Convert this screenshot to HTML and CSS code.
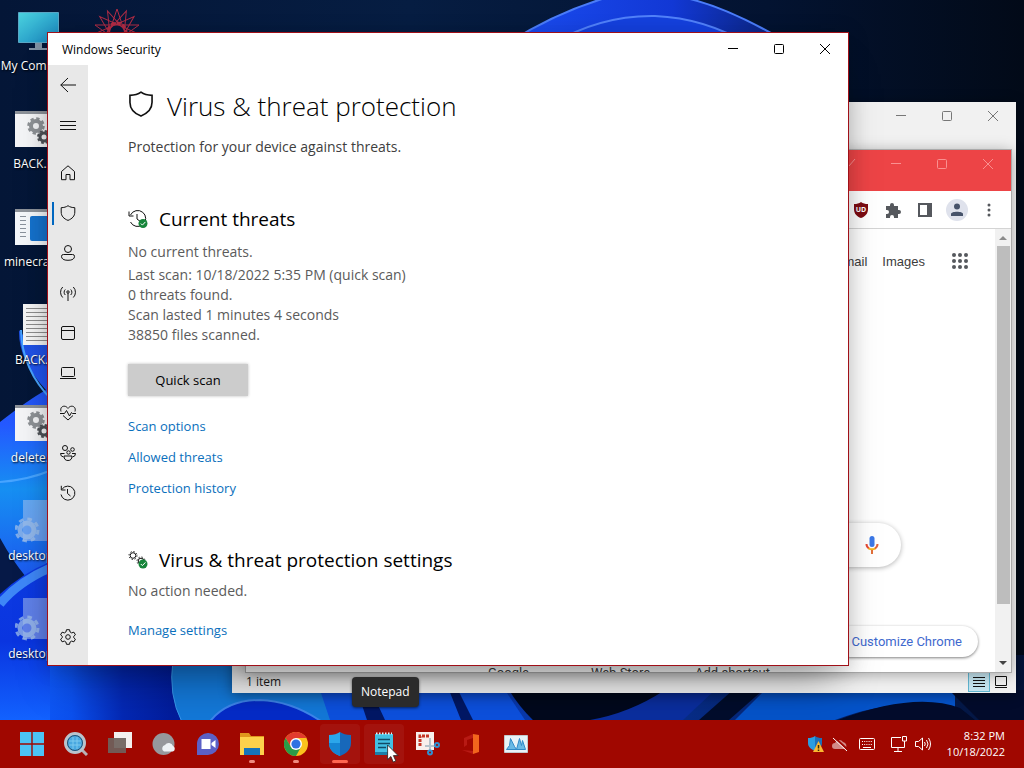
FILE: index.html
```html
<!DOCTYPE html>
<html lang="en">

<head>
    <meta charset="UTF-8">
    <meta name="viewport" content="width=device-width, initial-scale=1.0">
    <title>Desktop</title>
    <link rel="stylesheet" href="styles.css">
</head>

<body>
    <!-- shared symbols -->
    <svg class="symbols" aria-hidden="true">
        <symbol id="batch-file" viewBox="0 0 48 36">
            <path fill="#f4f5f7" d="M0 0h48v36H0z" />
            <path fill="#8d9299" d="M0 0h48v3H0z" />
            <circle cx="21" cy="15" r="5" fill="none" stroke="#8e9296" stroke-width="4" />
            <circle cx="21" cy="15" r="7.500" fill="none" stroke="#8e9296" stroke-width="2.500" stroke-dasharray="3.300 2.590" />
            <circle cx="29" cy="26" r="4" fill="none" stroke="#4e5257" stroke-width="3" />
            <circle cx="29" cy="26" r="6" fill="none" stroke="#4e5257" stroke-width="2" stroke-dasharray="2.700 2.010" />
        </symbol>
        <symbol id="ini-file" viewBox="0 0 48 46">
            <path fill="#b4c8f0" opacity=".5" d="M8 0h34v41H8z" />
            <circle cx="12" cy="30" r="7" fill="none" stroke="#9fbfe8" stroke-width="5" opacity=".75" />
            <circle cx="12" cy="30" r="11" fill="none" stroke="#9fbfe8" stroke-width="3" stroke-dasharray="4.600 4.040" opacity=".75" />
        </symbol>
        <symbol id="minimize" viewBox="0 0 12 12"><path d="M1 5.500h10" /></symbol>
        <symbol id="maximize" viewBox="0 0 12 12"><rect x="1.500" y="1.500" width="9" height="9" rx="1" /></symbol>
        <symbol id="close" viewBox="0 0 12 12"><path d="M1 1l10 10M11 1L1 11" /></symbol>
        <symbol id="shield" viewBox="0 0 16 16"><path d="M8 .7C6.200 2 4 2.600 1.200 2.700V7c0 4.200 2.600 6.700 6.800 8.400 4.200-1.700 6.800-4.200 6.800-8.400V2.700C12 2.600 9.800 2 8 .7z" /></symbol>
        <symbol id="history" viewBox="0 0 16 16"><path d="M1 9.500A7 7 0 1 0 2.200 4M1.300 .8v4.200h4.200M7.500 4v4.500l3 2.500" /></symbol>
    </svg>

    <main class="desktop">
        <svg class="wallpaper" viewBox="0 0 1024 720" preserveAspectRatio="none" aria-hidden="true">
            <defs>
                <linearGradient id="sky">
                    <stop offset="0" stop-color="#041637" />
                    <stop offset=".4" stop-color="#061d42" />
                    <stop offset=".75" stop-color="#031331" />
                    <stop offset="1" stop-color="#020a18" />
                </linearGradient>
                <linearGradient id="arch">
                    <stop offset="0" stop-color="#1c50f5" />
                    <stop offset=".6" stop-color="#1238d5" />
                    <stop offset="1" stop-color="#0a2069" />
                </linearGradient>
                <linearGradient id="floor" gradientUnits="userSpaceOnUse" x1="0" x2="1024" y1="0" y2="0">
                    <stop offset="0" stop-color="#1262ff" />
                    <stop offset=".07" stop-color="#0b50ee" />
                    <stop offset=".12" stop-color="#0428b4" />
                    <stop offset=".17" stop-color="#021c9b" />
                    <stop offset=".45" stop-color="#0a3dbb" />
                    <stop offset="1" stop-color="#031339" />
                </linearGradient>
                <linearGradient id="petal" x1="0" x2="0" y1="0" y2="1">
                    <stop offset="0" stop-color="#1e4fdc" />
                    <stop offset=".4" stop-color="#2458ff" />
                    <stop offset=".65" stop-color="#168ff2" />
                    <stop offset="1" stop-color="#1c57ef" />
                </linearGradient>
                <linearGradient id="lower" x1="0" x2="0" y1="0" y2="1">
                    <stop offset="0" stop-color="#0d3be2" />
                    <stop offset=".5" stop-color="#0a35e0" />
                    <stop offset="1" stop-color="#1262ff" />
                </linearGradient>
            </defs>
            <rect width="1024" height="720" fill="url(#sky)" />
            <path fill="url(#arch)" stroke="#4a7cf8" stroke-width="2" d="M480 62Q540 18 602-1Q650-14 690-1Q735 10 800 50v40z" />
            <path fill="#1440dd" stroke="#5181f9" stroke-width="2" d="M550 45Q600 15 655 16Q705 18 750 45z" />
            <!-- bottom petals -->
            <path fill="url(#floor)" d="M0 655h1024v65H0z" />
            <path fill="#1378d8" stroke="#3799ec" d="M173 660Q168 695 182 722H340V660z" />
            <path fill="#052bc8" stroke="#3d85ec" stroke-width="2" d="M208 724Q225 700 260 700Q293 701 325 724z" />
            <path fill="#0d50dd" d="M320 690h185l20 30H330z" />
            <path fill="#021765" d="M357 690h14l14 30h-18zM449 690h9l15 30h-12z" />
            <path fill="#02091d" d="M509 690h200Q650 716 600 722H535Q520 708 509 690z" />
            <path fill="#0b2e9e" d="M590 720Q630 713 665 690h50l-32 30z" />
            <path fill="#020d2c" d="M733 690h30l-34 30h-30z" />
            <path fill="#0553c9" d="M765 690h190v20Q900 695 835 720H735z" />
            <path fill="#020b2b" d="M838 720Q915 691 960 708l15 12zM949 690h75v30h-45z" />
            <!-- left petals -->
            <path fill="url(#petal)" d="M19 330Q30 350 70 320V580H0V422Q28 400 46 390Q18 360 19 330z" />
            <path fill="none" stroke="#47a4ff" stroke-width="2" d="M21 330Q22 370 52 400M0 482Q28 480 52 470" />
            <path fill="#061947" d="M0 538Q12 560 26 577L0 595z" />
            <path fill="url(#lower)" d="M0 594Q24 572 50 562V720H0z" />
            <path fill="none" stroke="#3e87f7" stroke-width="9" d="M0 604Q18 582 50 568" />
        </svg>

        <ul class="shortcuts">
            <li>
                <svg viewBox="0 0 48 46">
                    <defs>
                        <linearGradient id="screen" x2="1" y2="1">
                            <stop stop-color="#4bd3df" />
                            <stop offset="1" stop-color="#1683bd" />
                        </linearGradient>
                    </defs>
                    <path fill="url(#screen)" stroke="#5aa6c4" d="M3.500 2.500h40v30h-40z" />
                    <path fill="#8193a5" d="M20 33h7v5h6v2H14v-2h6z" />
                </svg>
                <span>My Computer</span>
            </li>
            <li><svg class="wide"><use href="#batch-file" /></svg><span>BACK.bat</span></li>
            <li>
                <svg viewBox="0 0 48 36" class="wide">
                    <path fill="#f4f7fa" d="M0 0h48v36H0z" />
                    <path fill="#8d9299" d="M0 0h48v3H0z" />
                    <path stroke="#8a929c" d="M5 7.500h6M5 11.500h6M5 15.500h6M5 19.500h6M5 23.500h6M5 27.500h6" />
                    <rect x="15" y="7" width="28" height="25" rx="2" fill="#1572cd" />
                </svg>
                <span>minecraft.ex</span>
            </li>
            <li>
                <svg viewBox="0 0 48 46">
                    <path fill="#f5f5f5" d="M8 0h32v41H8z" />
                    <path stroke="#8d8d8d" d="M11 4.500h26M11 8.500h26M11 12.500h26M11 16.500h26M11 20.500h26M11 24.500h26M11 28.500h26M11 32.500h26M11 36.500h26" />
                </svg>
                <span>BACK.txt</span>
            </li>
            <li><svg class="wide"><use href="#batch-file" /></svg><span>delete.bat</span></li>
            <li><svg><use href="#ini-file" /></svg><span>desktop.ini</span></li>
            <li><svg><use href="#ini-file" /></svg><span>desktop.ini</span></li>
        </ul>

        <svg class="star" viewBox="-24 -24 48 48" fill="none" stroke="#b02c45" aria-hidden="true">
            <path d="M0-23L14 19-22-7h44L-14 19z" />
            <path d="M0-23L14 19-22-7h44L-14 19z" transform="rotate(24)" />
            <path d="M0-23L14 19-22-7h44L-14 19z" transform="rotate(48)" />
            <circle r="9" stroke-width="3" stroke-dasharray="4 2" />
        </svg>

        <!-- file explorer -->
        <section class="window explorer" aria-label="File Explorer">
            <header class="titlebar">
                <div class="window-buttons">
                    <button aria-label="Minimize"><svg><use href="#minimize" /></svg></button>
                    <button aria-label="Maximize"><svg><use href="#maximize" /></svg></button>
                    <button aria-label="Close"><svg><use href="#close" /></svg></button>
                </div>
            </header>
            <footer class="statusbar">
                <span>1 item</span>
                <div class="view-buttons">
                    <button class="active" aria-label="Details"><svg viewBox="0 0 12 12"><path d="M0 1.500h12M0 4.500h12M0 7.500h12M0 10.500h12" /></svg></button>
                    <button aria-label="Large icons"><svg viewBox="0 0 12 12"><path d="M.5 .5h11v9H.5zM0 11.500h12" /></svg></button>
                </div>
            </footer>
        </section>

        <!-- browser -->
        <section class="window browser" aria-label="Chrome">
            <header class="titlebar">
                <div class="window-buttons">
                    <button aria-label="Search tabs"><svg viewBox="0 0 12 12"><path d="M1 4l4 4 6-7" /></svg></button>
                    <button aria-label="Minimize"><svg><use href="#minimize" /></svg></button>
                    <button aria-label="Maximize"><svg><use href="#maximize" /></svg></button>
                    <button aria-label="Close"><svg><use href="#close" /></svg></button>
                </div>
            </header>
            <div class="toolbar">
                <button class="ublock" aria-label="uBlock Origin">
                    <svg viewBox="0 0 16 16"><path fill="#7d0c12" d="M8 0c2 1.500 4 2 7 2v5c0 5-3 7.500-7 9-4-1.500-7-4-7-9V2c3 0 5-.5 7-2z" /></svg>
                    <span>UD</span>
                </button>
                <button aria-label="Extensions"><svg viewBox="0 0 16 16"><path fill="#55585d" d="M1 4h4V3a2 2 0 0 1 4 0v1h4v4h1a2 2 0 0 1 0 4h-1v4H9v-1a2 2 0 0 0-4 0v1H1v-4h1a2 2 0 0 0 0-4H1z" /></svg></button>
                <button aria-label="Side panel"><svg viewBox="0 0 16 16"><path fill="#55585d" fill-rule="evenodd" d="M1 1h14v14H1zM3 3v10h7V3z" /></svg></button>
                <button class="avatar" aria-label="Profile"><svg viewBox="0 0 16 16"><circle cx="8" cy="4.500" r="3" fill="#47536a" /><path fill="#47536a" d="M2 14v-2c0-3 12-3 12 0v2z" /></svg></button>
                <button aria-label="Menu"><svg viewBox="0 0 16 16" fill="#55585d"><circle cx="8" cy="3" r="1.500" /><circle cx="8" cy="8" r="1.500" /><circle cx="8" cy="13" r="1.500" /></svg></button>
            </div>
            <div class="viewport">
                <div class="page">
                    <nav class="google-nav">
                        <a href="#">Gmail</a>
                        <a href="#">Images</a>
                        <button aria-label="Google apps">
                            <svg viewBox="0 0 16 16" fill="#55585d">
                                <circle cx="2" cy="2" r="2" /><circle cx="8" cy="2" r="2" /><circle cx="14" cy="2" r="2" />
                                <circle cx="2" cy="8" r="2" /><circle cx="8" cy="8" r="2" /><circle cx="14" cy="8" r="2" />
                                <circle cx="2" cy="14" r="2" /><circle cx="8" cy="14" r="2" /><circle cx="14" cy="14" r="2" />
                            </svg>
                        </button>
                    </nav>
                    <div class="search">
                        <input type="text" aria-label="Search Google">
                        <button aria-label="Search by voice">
                            <svg viewBox="0 0 14 18" fill="none" stroke-width="2">
                                <rect x="4.500" width="5" height="11" rx="2.500" fill="#3b78e7" />
                                <path stroke="#e64a35" d="M1.500 8q0 3 2.500 4.500" />
                                <path stroke="#f3b51d" d="M3.500 12.300q3.500 2 7 0" />
                                <path stroke="#e0643c" d="M12.500 8q0 3-2.500 4.500" />
                                <path stroke="#e3703a" d="M7 14v4" />
                            </svg>
                        </button>
                    </div>
                    <div class="tiles">
                        <a href="#">Google</a>
                        <a href="#">Web Store</a>
                        <a href="#">Add shortcut</a>
                    </div>
                    <button class="customize">Customize Chrome</button>
                </div>
                <div class="scrollbar">
                    <svg viewBox="0 0 8 4"><path fill="#8b8b8b" d="M0 4l4-4 4 4z" /></svg>
                    <div class="thumb"></div>
                    <svg viewBox="0 0 8 4"><path fill="#444" d="M0 0l4 4 4-4z" /></svg>
                </div>
            </div>
        </section>

        <!-- windows security -->
        <section class="window security" aria-label="Windows Security">
            <header class="titlebar">
                <span>Windows Security</span>
                <div class="window-buttons">
                    <button aria-label="Minimize"><svg><use href="#minimize" /></svg></button>
                    <button aria-label="Maximize"><svg><use href="#maximize" /></svg></button>
                    <button aria-label="Close"><svg><use href="#close" /></svg></button>
                </div>
            </header>
            <div class="security-body">
                <nav class="sidebar">
                    <button aria-label="Back"><svg viewBox="0 0 16 16"><path d="M16 8H.7M8 1L.8 8 8 15" /></svg></button>
                    <button class="menu" aria-label="Open navigation"><svg viewBox="0 0 16 16"><path d="M0 4.500h16M0 8.500h16M0 12.500h16" /></svg></button>
                    <button aria-label="Home"><svg viewBox="0 0 16 16"><path d="M1.500 6.500L8 .8l6.500 5.700v8.200H10V9.500H6v5.200H1.500z" /></svg></button>
                    <button class="selected" aria-label="Virus &amp; threat protection"><svg><use href="#shield" /></svg></button>
                    <button aria-label="Account protection"><svg viewBox="0 0 16 16"><circle cx="8" cy="4" r="3.500" /><path d="M3.500 9.500h9q2 0 2 1.800 0 4-6.500 4t-6.500-4q0-1.800 2-1.800z" /></svg></button>
                    <button aria-label="Firewall &amp; network protection"><svg viewBox="0 0 16 16"><path d="M8 8v8M5.300 10a3.800 3.800 0 0 1 0-5.500M10.700 10a3.800 3.800 0 0 0 0-5.500M2.700 12.500a7.500 7.500 0 0 1 0-10.500M13.300 12.500a7.500 7.500 0 0 0 0-10.500" /><circle cx="8" cy="7" r="1.200" /></svg></button>
                    <button aria-label="App &amp; browser control"><svg viewBox="0 0 16 16"><rect x="1.500" y="1.500" width="13" height="13" rx="1.500" /><path d="M1.500 5.500h13" /></svg></button>
                    <button aria-label="Device security"><svg viewBox="0 0 16 16"><rect x="1.500" y="2.500" width="13" height="9" rx="1" /><path d="M0 13.500h16" /></svg></button>
                    <button aria-label="Device performance &amp; health"><svg viewBox="0 0 16 16"><path d="M1 6.500C0 3 2 1.200 4.200 1.200 6 1.200 7 2.200 8 3.400 9 2.200 10 1.200 11.800 1.200 14 1.200 16 3 15 6.500M0 8.500h4.500l2-3 3 5.500 2-3.500 1 1H16M3 10.500l5 4.500 5-4.500" /></svg></button>
                    <button aria-label="Family options"><svg viewBox="0 0 16 16"><circle cx="5" cy="3" r="2.500" /><circle cx="12.500" cy="4.500" r="1.800" /><circle cx="8.500" cy="7.500" r="1.700" /><path d="M4.500 8.500H.5q0 3 3 3.500M12 8.500h3.500q0 3-3 3.500M4 11h8q0 4.500-4 4.500T4 11z" /></svg></button>
                    <button aria-label="Protection history"><svg><use href="#history" /></svg></button>
                    <button class="settings" aria-label="Settings"><svg viewBox="0 0 16 16"><path d="M6.500.7h3l.6 2.300 1.500.9 2.300-.7 1.500 2.600-1.700 1.600v1.200l1.700 1.600-1.500 2.600-2.300-.7-1.500.9-.6 2.300h-3L5.900 13l-1.500-.9-2.300.7L.6 10.200l1.700-1.600V7.400L.6 5.800l1.500-2.600 2.300.7L5.900 3z" /><circle cx="8" cy="8" r="2.300" /></svg></button>
                </nav>
                <article class="content">
                    <h1><svg><use href="#shield" /></svg>Virus &amp; threat protection</h1>
                    <p class="intro">Protection for your device against threats.</p>

                    <h2>
                        <svg viewBox="0 0 20 20">
                            <path d="M2.500 13A8 8 0 1 0 2.500 6M1 2.500V7h4.500M9 5v5l4 3" />
                            <circle cx="15" cy="14.500" r="4.500" fill="#16853a" stroke="none" />
                            <path class="tick" d="M12.800 14.500l1.600 1.600 3-3.200" />
                        </svg>
                        Current threats
                    </h2>
                    <p>No current threats.</p>
                    <p class="scan-info">
                        Last scan: 10/18/2022 5:35 PM (quick scan)<br>
                        0 threats found.<br>
                        Scan lasted 1 minutes 4 seconds<br>
                        38850 files scanned.
                    </p>
                    <button class="scan">Quick scan</button>
                    <ul class="links">
                        <li><a href="#">Scan options</a></li>
                        <li><a href="#">Allowed threats</a></li>
                        <li><a href="#">Protection history</a></li>
                    </ul>

                    <h2>
                        <svg viewBox="0 0 20 20">
                            <circle cx="5" cy="5.500" r="2.800" />
                            <circle cx="5" cy="5.500" r="4" stroke-dasharray="1.300 1.840" />
                            <circle cx="13" cy="11" r="2.800" />
                            <circle cx="13" cy="11" r="4" stroke-dasharray="1.300 1.840" />
                            <circle cx="15" cy="14" r="4.500" fill="#16853a" stroke="none" />
                            <path class="tick" d="M12.800 14l1.600 1.600 3-3.200" />
                        </svg>
                        Virus &amp; threat protection settings
                    </h2>
                    <p class="status">No action needed.</p>
                    <ul class="links">
                        <li><a href="#">Manage settings</a></li>
                    </ul>
                </article>
            </div>
        </section>
    </main>

    <footer class="taskbar">
        <div class="apps">
            <button aria-label="Start"><svg viewBox="0 0 24 24" fill="#4cc3f6"><path d="M0 0h11.300v11.300H0zM12.700 0H24v11.300H12.700zM0 12.700h11.300V24H0zM12.700 12.700H24V24H12.700z" /></svg></button>
            <button aria-label="Search"><svg viewBox="0 0 24 24"><path stroke="#b8b2b4" stroke-width="3" d="M18 18l5 5" /><circle cx="11" cy="11" r="9.500" fill="#49a8e0" stroke="#b9c3cc" stroke-width="3" /><circle cx="11" cy="11" r="7.500" fill="none" stroke="#27506f" /><path stroke="#7cc9ee" fill="none" d="M5 9h12M5 13h12M9 5v12M13 5v12" /></svg></button>
            <button aria-label="Task view"><svg viewBox="0 0 24 24"><path fill="#f3efee" d="M6 0h18v16H6z" /><path fill="#6e625c" d="M0 6h18v15H0z" opacity=".92" /></svg></button>
            <button aria-label="Widgets"><svg viewBox="0 0 24 24"><circle cx="11.500" cy="12" r="11" fill="#96989c" /><path fill="#eef2f5" d="M12 19.500a3.500 3.500 0 0 1 1-6.500 4.500 4.500 0 0 1 8 1 3 3 0 0 1 0 5.500z" /></svg></button>
            <button aria-label="Chat"><svg viewBox="0 0 24 24"><path fill="#5b60c6" d="M1 23V11A11 11 0 1 1 12 23z" /><path fill="#fff" d="M5.500 7h9v10h-9zM15.500 11l4-3v8l-4-3z" /></svg></button>
            <button class="running" aria-label="File Explorer"><svg viewBox="0 0 24 24"><path fill="#e0961d" d="M0 1h9l2 3h13v18H0z" /><path fill="#fdd14b" d="M0 5h24v18H0z" /><path fill="#1673ba" d="M4 16h16v7H4z" /></svg></button>
            <button class="running" aria-label="Chrome"><svg viewBox="0 0 24 24"><circle cx="12" cy="12" r="12" fill="#fbc21d" /><path fill="#e23b2e" d="M1.600 6A12 12 0 0 1 22.400 6H12l-5 9z" /><path fill="#2a9c48" d="M1.600 6A12 12 0 0 0 12 24l5-9-5 2-5-2z" /><circle cx="12" cy="12" r="6" fill="#fff" /><circle cx="12" cy="12" r="4.600" fill="#2f72e2" /></svg></button>
            <button class="running active" aria-label="Windows Security"><svg viewBox="0 0 24 24"><path fill="#2ba6ea" d="M12 0C9 2 6 3 1 3v8c0 7 5 10.500 11 13z" /><path fill="#1768ba" d="M12 0c3 2 6 3 11 3v8c0 7-5 10.500-11 13z" /><path fill="#1585d3" d="M1 11h11v13C6 21.500 1 18 1 11z" /></svg></button>
            <button class="hover" aria-label="Notepad">
                <svg viewBox="0 0 24 24"><path fill="#43bfe3" d="M3 2h18v21H3z" /><path fill="#1c7ea8" d="M3 20h18v3H3z" /><path stroke="#e2f6fb" stroke-width="2" stroke-dasharray="1.500 1.500" d="M4 1.500h16" /><path stroke="#124b67" stroke-width="1.500" d="M6 7.500h12M6 11.500h12M6 15.500h8" /></svg>
                <span class="tooltip" role="tooltip">Notepad</span>
            </button>
            <button aria-label="Snipping Tool"><svg viewBox="0 0 24 24"><path fill="#f8efec" d="M0 0h18v18H0z" /><path fill="none" stroke="#c53525" stroke-width="3" stroke-dasharray="3 1" d="M4 14V4h10" /><path stroke="#b5c3cb" stroke-width="2" d="M14 6v13M9 14h10" /><circle cx="14" cy="20.500" r="2" fill="none" stroke="#2f8fd0" stroke-width="2" /><circle cx="21" cy="13" r="2" fill="none" stroke="#2f8fd0" stroke-width="2" /></svg></button>
            <button aria-label="Office"><svg viewBox="0 0 24 24"><path fill="#f2651d" d="M13 2l6 1v17l-6 2z" /><path fill="#b81a14" d="M13 2L4 6v9l3-2V8l6-2zM2 18l11 1v3z" /></svg></button>
            <button aria-label="Performance Monitor"><svg viewBox="0 0 24 24"><path fill="#e8f2f7" stroke="#c4c9cc" d="M.5 3.500h23v17H.5z" /><path fill="#69b9e5" stroke="#3089c7" d="M2.500 17.500l3-4 1-7 4 8 2 3 3-11 2 7 1-5 3 9z" /></svg></button>
        </div>
        <div class="tray">
            <svg class="tray-icon" viewBox="0 0 16 16"><path fill="#2b9de0" d="M7 0C5 1.500 3 2 0 2v5c0 4 3 6 7 8z" /><path fill="#1d6fb8" d="M7 0c2 1.500 4 2 7 2v5c0 4-3 6-7 8z" /><path fill="#fbb830" d="M10.500 5L16 16H5z" /><path stroke="#3a2a08" stroke-width="1.500" d="M10.500 9v3.500M10.500 13.500v1.500" /></svg>
            <svg class="tray-icon" viewBox="0 0 16 16"><path fill="#d28a87" d="M3 13a3 3 0 0 1 0-6 4.500 4.500 0 0 1 8-1 4 4 0 0 1 2 7z" /><path stroke="#a00700" stroke-width="2" d="M2 1l13 12" /><path stroke="#fff" d="M1 2l14 13" /></svg>
            <svg class="tray-icon keyboard" viewBox="0 0 16 16" fill="none" stroke="#fff"><rect x=".5" y="2.500" width="15" height="11" rx="1" /><path d="M3 5.500h10M3 8.500h10" stroke-dasharray="1 1.200" /><path d="M4 11.500h8" /></svg>
            <svg class="tray-icon" viewBox="0 0 16 16" fill="none" stroke="#fff"><path d="M10 1.500H.5v10h13V7M7 12v3M3 15.500h8M11.500 .5h4V5h-4zM13.500 5v3" /></svg>
            <svg class="tray-icon" viewBox="0 0 16 16" fill="none" stroke="#fff"><path d="M.5 5.500h3l4-3.500v12l-4-3.500h-3zM9.500 6q1.500 2 0 4M11.500 4q3 4 0 8M13.500 2q4 6 0 12" /></svg>
            <time class="clock">8:32 PM<br>10/18/2022</time>
        </div>
    </footer>

    <svg class="cursor" viewBox="0 0 12 19" aria-hidden="true"><path fill="#fff" stroke="#222" stroke-width=".8" d="M.6 1v14.500l3.300-3L6.200 18l2.600-1.100-2.400-5.300h4.700z" /></svg>
</body>

</html>
```

FILE: styles.css
```css
*,
*::before,
*::after {
    box-sizing: border-box;
}

body {
    margin: 0;
    height: 100vh;
    display: flex;
    flex-direction: column;
    overflow: hidden;
    font-family: "Open Sans", "Noto Sans", sans-serif;
    font-size: 12px;
    color: #1a1a1a;
}

button {
    display: flex;
    align-items: center;
    justify-content: center;
    padding: 0;
    border: 0;
    background: none;
    font: inherit;
    color: inherit;
}

ul {
    list-style: none;
    margin: 0;
    padding: 0;
}

a {
    text-decoration: none;
}

.symbols {
    position: absolute;
    width: 0;
    height: 0;
}

/* desktop */
.desktop {
    position: relative;
    flex: 1;
    min-height: 0;
    overflow: hidden;
}

.wallpaper {
    position: absolute;
    width: 100%;
    height: 100%;
}

.shortcuts {
    position: relative;
    width: 78px;
    padding-top: 10px;
    color: #fff;
    text-shadow: 1px 1px 2px #000;
}

.shortcuts li {
    display: flex;
    flex-direction: column;
    align-items: center;
    height: 98px;
}

.shortcuts svg {
    width: 48px;
    height: 46px;
    margin-bottom: 2px;
}

.shortcuts .wide {
    height: 36px;
    margin: 3px 0 9px;
}

.shortcuts span {
    line-height: 16px;
    white-space: nowrap;
}

.star {
    position: absolute;
    left: 93px;
    top: 8px;
    width: 48px;
    height: 48px;
}

/* windows */
.window {
    position: absolute;
    display: flex;
    flex-direction: column;
}

.titlebar {
    display: flex;
    align-items: flex-start;
    justify-content: space-between;
    flex: none;
}

.window-buttons {
    display: flex;
    margin-left: auto;
}

.window-buttons button {
    width: 46px;
    height: 32px;
}

.window-buttons svg {
    width: 12px;
    height: 12px;
    fill: none;
    stroke: currentColor;
}

.explorer {
    left: 232px;
    top: 102px;
    right: 8px;
    bottom: 27px;
    justify-content: space-between;
    background: #f1f1f1;
    box-shadow: 0 2px 12px rgba(0, 0, 0, .4);
}

.explorer .window-buttons {
    color: #777;
    height: 28px;
    align-items: center;
}

.statusbar {
    display: flex;
    justify-content: space-between;
    height: 21px;
    padding: 0 4px 0 14px;
    line-height: 20px;
}

.view-buttons {
    display: flex;
}

.view-buttons button {
    width: 22px;
    height: 20px;
}

.view-buttons .active {
    background: #c3e3ee;
    border: 1px solid #5fb4cf;
}

.view-buttons svg {
    width: 12px;
    height: 12px;
    fill: none;
    stroke: #111;
}

.browser {
    left: 246px;
    top: 150px;
    right: 13px;
    bottom: 48px;
    overflow: hidden;
    background: #fff;
    box-shadow: 0 2px 14px rgba(0, 0, 0, .35);
    outline: 1px solid #aaa;
}

.browser .titlebar {
    height: 41px;
    background: #ed4446;
}

.browser .window-buttons {
    color: #fa9090;
    height: 28px;
    align-items: center;
}

.toolbar {
    display: flex;
    align-items: center;
    justify-content: flex-end;
    flex: none;
    gap: 10px;
    height: 38px;
    padding-right: 11px;
    border-bottom: 1px solid #d4d4d4;
}

.toolbar button {
    width: 22px;
    height: 22px;
}

.toolbar svg {
    width: 16px;
    height: 16px;
}

.toolbar .avatar {
    border-radius: 50%;
    background: #dfe2ec;
}

.ublock {
    position: relative;
}

.ublock span {
    position: absolute;
    font-size: 7px;
    font-weight: bold;
    line-height: 8px;
    color: #fff;
}

.viewport {
    display: flex;
    flex: 1;
    min-height: 0;
}

.page {
    position: relative;
    display: flex;
    flex-direction: column;
    align-items: center;
    flex: 1;
    overflow: hidden;
    font-family: Roboto, "Liberation Sans", sans-serif;
    font-size: 13px;
}

.google-nav {
    display: flex;
    align-items: center;
    align-self: stretch;
    justify-content: flex-end;
    flex: none;
    gap: 15px;
    height: 64px;
    padding-right: 27px;
    font-family: "Liberation Sans", sans-serif;
}

.google-nav a,
.tiles a {
    color: #3c3c3c;
}

.google-nav button {
    margin-left: 12px;
}

.google-nav svg {
    width: 16px;
    height: 16px;
}

.search {
    display: flex;
    flex: none;
    align-items: center;
    width: 75%;
    height: 44px;
    margin-top: 230px;
    padding: 0 22px;
    border-radius: 22px;
    box-shadow: 0 1px 5px rgba(0, 0, 0, .3);
}

.search input {
    flex: 1;
    border: 0;
    outline: 0;
}

.search svg {
    width: 14px;
    height: 18px;
}

.tiles {
    display: flex;
    flex: none;
    margin-top: 98px;
}

.tiles a {
    width: 112px;
    line-height: 16px;
    text-align: center;
}

.customize {
    position: absolute;
    right: 17px;
    bottom: 15px;
    height: 31px;
    padding: 0 16px;
    border-radius: 16px;
    background: #fff;
    box-shadow: 0 1px 3px rgba(0, 0, 0, .5);
    color: #3f69ce;
}

.scrollbar {
    display: flex;
    flex-direction: column;
    align-items: center;
    width: 16px;
    padding: 7px 0;
    background: #f1f1f1;
}

.scrollbar svg {
    width: 8px;
    height: 4px;
}

.thumb {
    width: 13px;
    flex: 1;
    margin: 6px 0 57px;
    background: #bdbdbd;
}

/* windows security */
.security {
    left: 47px;
    top: 32px;
    right: 175px;
    bottom: 54px;
    border: 1px solid #a01018;
    background: #fff;
    box-shadow: 0 28px 40px -14px rgba(0, 0, 0, .35), 0 2px 20px rgba(0, 0, 0, .15);
}

.security .titlebar {
    height: 32px;
    padding-left: 14px;
    line-height: 34px;
    color: #000;
}

.security-body {
    display: flex;
    flex: 1;
    min-height: 0;
}

.sidebar {
    display: flex;
    flex-direction: column;
    flex: none;
    width: 40px;
    padding-bottom: 8px;
    background: #e8e8e8;
}

.sidebar button {
    position: relative;
    flex: none;
    height: 40px;
}

.sidebar .menu {
    margin-bottom: 8px;
}

.sidebar .settings {
    margin-top: auto;
}

.sidebar .selected::before {
    content: "";
    position: absolute;
    left: 4px;
    top: 9px;
    width: 2px;
    height: 23px;
    background: #0067c0;
}

.sidebar svg {
    width: 16px;
    height: 16px;
    fill: none;
    stroke: #111;
}

.content {
    flex: 1;
    padding: 21px 40px 0;
    overflow: hidden;
    font-size: 14px;
    line-height: 20px;
    color: #5b5b5b;
}

.content h1,
.content h2 {
    display: flex;
    align-items: center;
    margin: 0;
    color: #000;
    font-weight: 400;
}

.content h1 {
    gap: 13px;
    font-size: 26px;
    font-weight: 300;
    line-height: 40px;
}

.content h1 svg {
    width: 26px;
    height: 26px;
    margin-top: -4px;
}

.content h2 {
    gap: 11px;
    margin: 48px 0 9px;
    font-size: 19px;
    line-height: 28px;
}

.content h2 svg {
    width: 20px;
    height: 20px;
}

.content svg {
    fill: none;
    stroke: #111;
}

.content .tick {
    stroke: #fff;
}

.content p {
    margin: 0;
}

.content .intro {
    margin-top: 11px;
    color: #404040;
}

.content .scan-info {
    margin-top: 3px;
}

.content .status {
    margin: -2px 0 -1px;
}

.scan {
    width: 120px;
    height: 32px;
    margin-top: 19px;
    background: #ccc;
    box-shadow: 0 0 3px #bbb;
    color: #000;
    font-size: 13px;
}

.links {
    display: flex;
    flex-direction: column;
    gap: 11px;
    margin-top: 20px;
    font-size: 13px;
}

.links a {
    color: #0a6fbc;
}

/* taskbar */
.taskbar {
    display: flex;
    justify-content: space-between;
    flex: none;
    height: 48px;
    padding: 0 19px 0 10px;
    background: #a00700;
    color: #fff;
}

.apps {
    display: flex;
    align-items: center;
}

.apps button {
    position: relative;
    width: 40px;
    height: 40px;
    margin: 0 2px;
    border-radius: 4px;
}

.apps svg {
    width: 24px;
    height: 24px;
}

.apps .active,
.apps .hover {
    background: rgba(255, 255, 255, .05);
}

.running::after {
    content: "";
    position: absolute;
    bottom: 1px;
    width: 6px;
    height: 3px;
    border-radius: 2px;
    background: #ee8b80;
}

.running.active::after {
    width: 16px;
    background: #ff6650;
}

.tooltip {
    position: absolute;
    left: -12px;
    bottom: 57px;
    padding: 6px 9px;
    border-radius: 4px;
    background: #2b2b2b;
    box-shadow: 0 1px 3px rgba(0, 0, 0, .6);
    line-height: 18px;
}

.tray {
    display: flex;
    align-items: center;
    gap: 8px;
}

.tray-icon {
    width: 16px;
    height: 16px;
}

.keyboard {
    margin: 0 8px 0 3px;
}

.clock {
    margin-left: 8px;
    font-size: 11px;
    line-height: 16px;
    text-align: right;
}

.cursor {
    position: absolute;
    left: 387px;
    top: 744px;
    width: 12px;
    height: 19px;
}
```
